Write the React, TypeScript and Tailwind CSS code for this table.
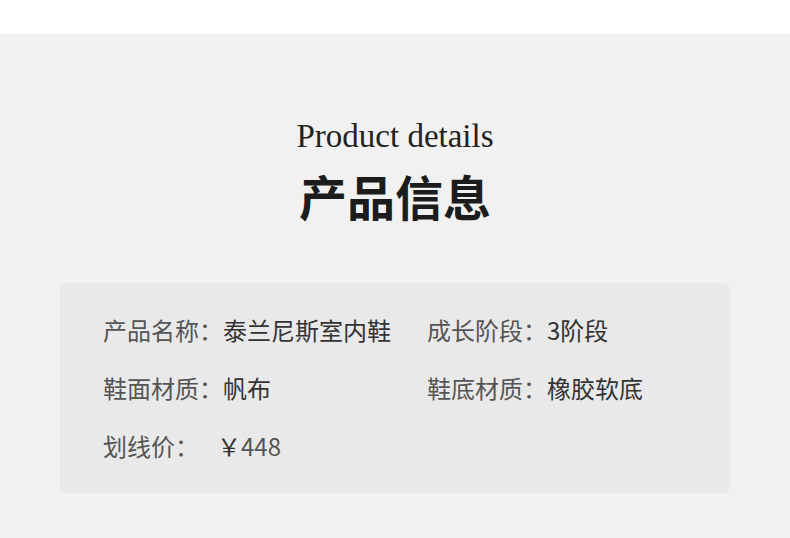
const rows: [string, React.ReactNode][] = [
  ["产品名称：", "泰兰尼斯室内鞋"],
  ["成长阶段：", "3阶段"],
  ["鞋面材质：", "帆布"],
  ["鞋底材质：", "橡胶软底"],
  [
    "划线价：",
    <span className="-ml-[6px]">
      ￥<span className="text-[#555]">448</span>
    </span>,
  ],
];

export default function App() {
  return (
    <div className="w-[790px] h-[538px] bg-white pt-[34px] font-['Noto_Sans_CJK_SC',sans-serif]">
      <div className="h-full bg-[#f1f1f1] pt-[80px] px-[60px]">
        <div className="flex flex-col items-center">
          <p className="font-['Liberation_Serif',serif] text-[33px] leading-[44px] text-[#222]">
            Product details
          </p>
          <h2 className="mt-[9px] text-[48px] leading-[56px] font-bold text-[#1c1c1c]">
            产品信息
          </h2>
        </div>
        <div className="mt-[60px] rounded-md bg-[#e9e9e9] pl-[43px] pt-[18px] pb-[18px] grid grid-cols-[324px_1fr]">
          {rows.map(([label, value]) => (
            <div key={label} className="flex items-center h-[58px] text-[24px] leading-none">
              <span className="w-[120px] shrink-0 text-[#555]">{label}</span>
              <span className="text-[#333]">{value}</span>
            </div>
          ))}
        </div>
      </div>
    </div>
  );
}
